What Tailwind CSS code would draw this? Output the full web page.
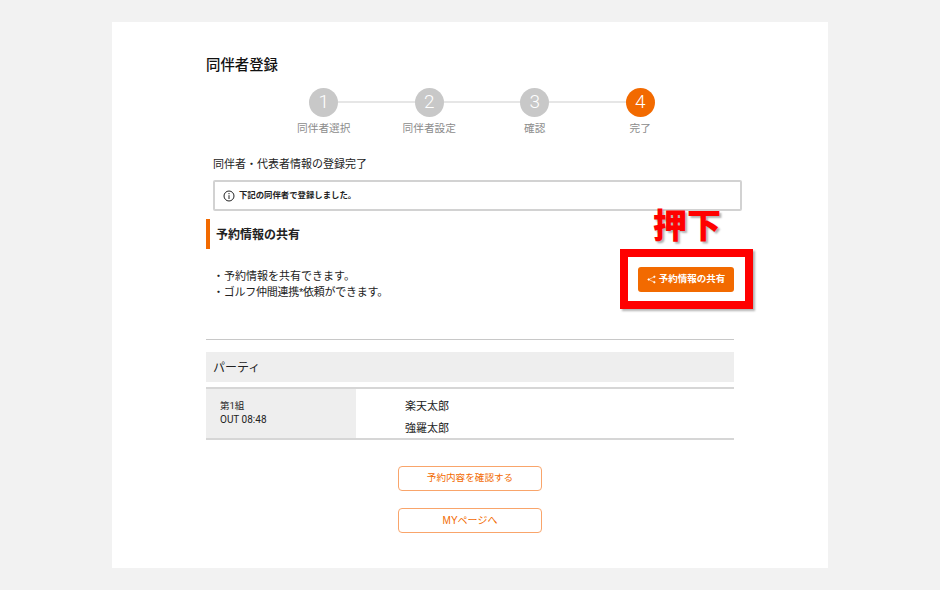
<!DOCTYPE html>
<html lang="ja">
<head>
  <meta charset="UTF-8" />
  <title>同伴者登録</title>
  <script src="https://cdn.jsdelivr.net/npm/@tailwindcss/browser@4"></script>
</head>
<body class="bg-[#f2f2f2] text-[#222] font-['Liberation_Sans','Noto_Sans_CJK_JP',sans-serif]">
  <div class="w-[940px] h-[590px] pt-[22px] overflow-hidden">
    <main class="relative w-[716px] h-[546px] ml-[112px] bg-white pl-[94px] pt-[34px]">
      <h1 class="text-[14.4px] leading-[18px] font-medium text-[#111]">同伴者登録</h1>

      <!-- steps -->
      <div class="relative w-[422px] ml-[65px] mt-[14px] flex justify-between">
        <div class="absolute left-[53px] right-[53px] top-[13px] h-[2px] bg-[#e6e6e6]"></div>
        <div class="relative w-[106px] flex flex-col items-center">
          <div class="w-[29px] h-[29px] rounded-full bg-[#c8c8c8] text-white text-[19px] font-['Roboto'] font-light flex items-center justify-center">1</div>
          <p class="mt-[4px] text-[10.7px] leading-[15px] text-[#8c8c8c]">同伴者選択</p>
        </div>
        <div class="relative w-[106px] flex flex-col items-center">
          <div class="w-[29px] h-[29px] rounded-full bg-[#c8c8c8] text-white text-[19px] font-['Roboto'] font-light flex items-center justify-center">2</div>
          <p class="mt-[4px] text-[10.7px] leading-[15px] text-[#8c8c8c]">同伴者設定</p>
        </div>
        <div class="relative w-[106px] flex flex-col items-center">
          <div class="w-[29px] h-[29px] rounded-full bg-[#c8c8c8] text-white text-[19px] font-['Roboto'] font-light flex items-center justify-center">3</div>
          <p class="mt-[4px] text-[10.7px] leading-[15px] text-[#8c8c8c]">確認</p>
        </div>
        <div class="relative w-[106px] flex flex-col items-center">
          <div class="w-[29px] h-[29px] rounded-full bg-[#f26a00] text-white text-[19px] font-['Roboto'] font-light flex items-center justify-center">4</div>
          <p class="mt-[4px] text-[10.7px] leading-[15px] text-[#8c8c8c]">完了</p>
        </div>
      </div>

      <p class="ml-[7px] mt-[20px] text-[11px] leading-[16px]">同伴者・代表者情報の登録完了</p>

      <div class="ml-[7px] mt-[8px] w-[529px] h-[31px] border-2 border-[#d2d2d2] rounded-[2px] flex items-center pl-[8px] gap-[4px]">
        <svg class="w-[12px] h-[12px]" viewBox="0 0 12 12" fill="none" stroke="#222" stroke-width="1"><circle cx="6" cy="6" r="5"/><path d="M6 5.2V9M6 3v1.2"/></svg>
        <span class="text-[8.4px] font-bold leading-[12px] -mt-[1px]">下記の同伴者で登録しました。</span>
      </div>

      <h2 class="mt-[8px] h-[30px] border-l-[4px] border-[#f26a00] pl-[6px] pt-[1px] flex items-center text-[12px] font-bold">予約情報の共有</h2>

      <div class="mt-[18px] w-[528px] h-[25px] flex justify-between">
        <ul class="ml-[7px] mt-[1px] text-[11px] leading-[16px]">
          <li>・予約情報を共有できます。</li>
          <li class="tracking-[-0.25px]">・ゴルフ仲間連携*依頼ができます。</li>
        </ul>
        <button class="w-[96px] h-[25px] rounded-[3px] bg-[#f26a00] text-white text-[9.5px] font-bold flex items-center justify-center gap-[3px]">
          <svg class="w-[9px] h-[9px]" viewBox="0 0 9 9" fill="white" stroke="white" stroke-width="0.6"><circle cx="7.4" cy="1.8" r="0.8"/><circle cx="7.4" cy="7.2" r="0.8"/><circle cx="1.6" cy="4.5" r="0.8"/><path d="M7.4 1.8 1.6 4.5l5.8 2.7" fill="none"/></svg>
          予約情報の共有
        </button>
      </div>

      <hr class="mt-[47px] w-[528px] border-t-[1px] border-[#c8c8c8]" />

      <div class="mt-[12px] w-[528px] h-[30px] bg-[#eeeeee] pl-[7px] pt-[1px] flex items-center text-[12px]">パーティ</div>

      <div class="mt-[5px] w-[528px] h-[53px] border-y-2 border-[#d6d6d6] flex">
        <div class="w-[150px] bg-[#eeeeee] pl-[14px] pt-[10px] text-[9.5px] leading-[14px] font-['Roboto','Noto_Sans_CJK_JP',sans-serif]">
          <p>第1組</p>
          <p class="text-[10px]">OUT 08:48</p>
        </div>
        <div class="pl-[49px] pt-[6px] text-[11px] leading-[22px]">
          <p>楽天太郎</p>
          <p>強羅太郎</p>
        </div>
      </div>

      <div class="mt-[26px] w-[528px] flex flex-col items-center gap-[17px]">
        <a class="w-[144px] h-[25px] rounded-[4px] border border-[#f9a56b] text-[#f26a00] text-[9.6px] flex items-center justify-center">予約内容を確認する</a>
        <a class="w-[144px] h-[25px] rounded-[4px] border border-[#f9a56b] text-[#f26a00] text-[10px] flex items-center justify-center">MYページへ</a>
      </div>

      <!-- annotation over the share button -->
      <div class="absolute left-[508px] top-[227px] w-[133px] h-[60px] border-[8px] border-[#ff0000] shadow-[2px_2px_2px_rgba(0,0,0,0.3)]"></div>
      <p class="absolute left-[532px] top-[184px] w-[86px] text-center text-[34px] leading-[40px] font-black text-[#ff0000] [text-shadow:2px_2px_2px_rgba(0,0,0,0.3)]">押下</p>
    </main>
  </div>
</body>
</html>
